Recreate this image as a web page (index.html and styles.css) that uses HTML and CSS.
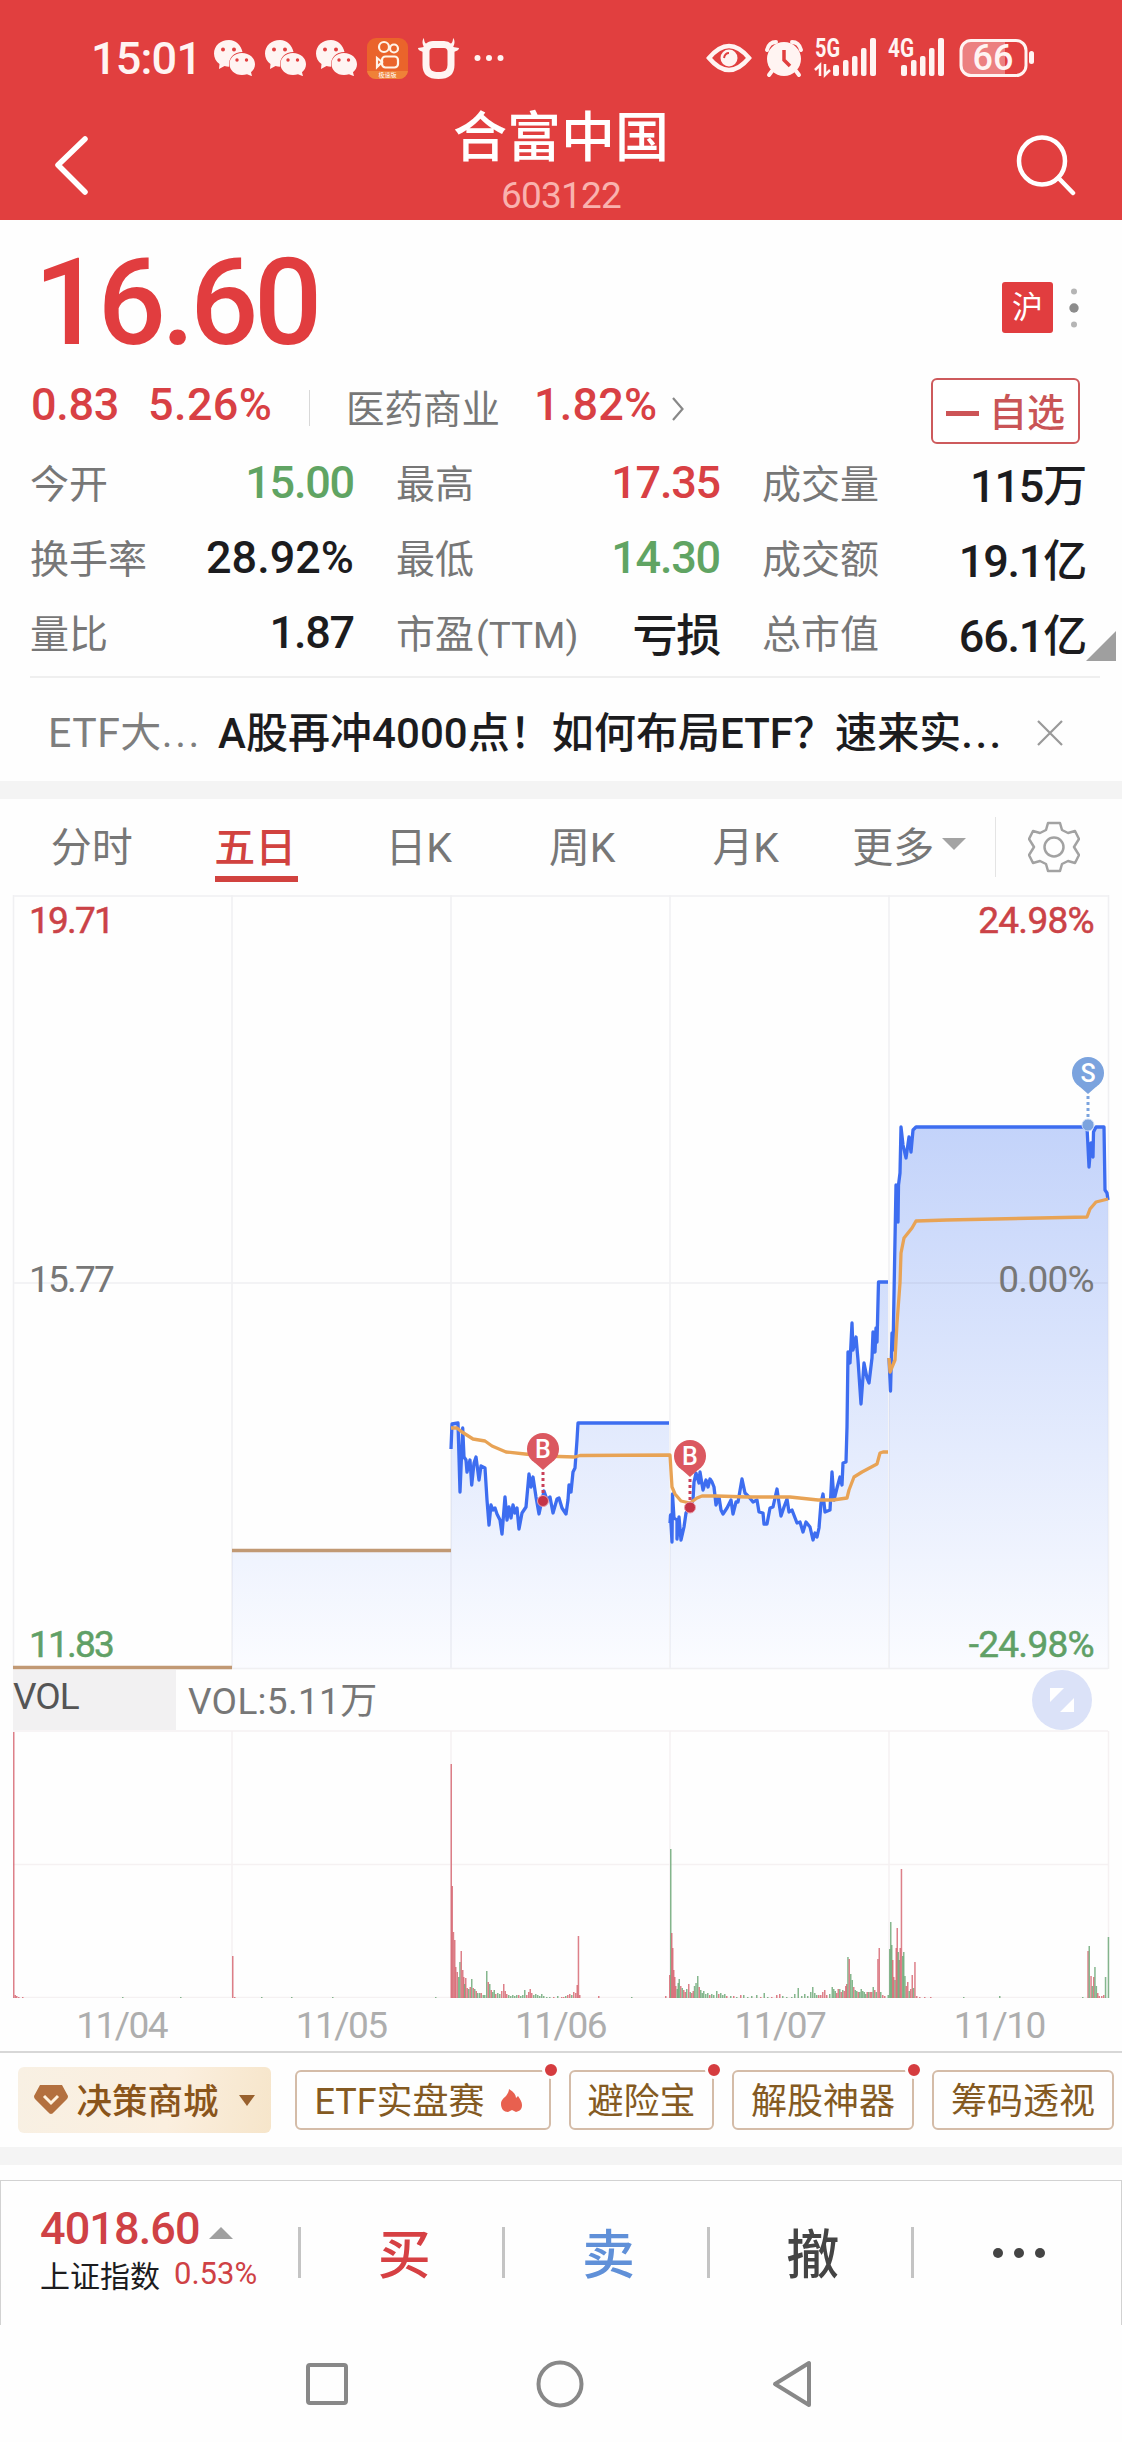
FILE: index.html
```html
<!DOCTYPE html>
<html lang="zh-CN">
<head>
  <meta charset="UTF-8">
  <title>合富中国 603122</title>
  <link rel="stylesheet" href="styles.css">
</head>
<body>

  <svg width="0" height="0" class="defs">
    <symbol id="wechat" viewBox="0 0 41 36">
      <path fill="#fff4f2" d="M15 0C6.500 0 0 5.800 0 13.500c0 4.200 2 8 5.500 10.500L5 29l5.500-3c1.500.5 3 .7 4.600.7C14 18 20 12 28.500 12 27 5 22 0 15 0z"/>
      <path fill="#fff4f2" d="M28 13c-7.500 0-12.500 5-12.500 11S20.500 35 28 35c1.700 0 3.500-.3 5-.8l5 2-1-4c2.500-2 4-5 4-8C41 18 35.500 13 28 13z"/>
      <g fill="#e13f3f"><circle cx="9" cy="9.500" r="2"/><circle cx="20" cy="9.500" r="2"/><circle cx="23" cy="20" r="1.700"/><circle cx="32.500" cy="20" r="1.700"/></g>
    </symbol>
  </svg>

  <header class="header">
    <div class="status-bar">
      <span class="clock">15:01</span>
      <div class="status-apps">
        <svg width="41" height="36"><use href="#wechat"/></svg>
        <svg width="41" height="36"><use href="#wechat"/></svg>
        <svg width="41" height="36"><use href="#wechat"/></svg>
        <svg width="41" height="41" viewBox="0 0 41 41">
          <rect width="41" height="41" rx="9" fill="#ea642b"/>
          <path d="M0 33h41a9 9 0 0 1-9 8H9a9 9 0 0 1-9-8z" fill="#ef8138"/>
          <g fill="none" stroke="#fff4e8" stroke-width="2.200"><circle cx="17" cy="9" r="5"/><circle cx="27" cy="10.500" r="4"/><rect x="15" y="18.500" width="16" height="11" rx="3.500"/><path d="M15 24l-5-4v9z"/></g>
          <text x="20.500" y="39" font-size="6" text-anchor="middle" fill="#fff">极速版</text>
        </svg>
        <svg width="41" height="41" viewBox="0 0 41 41">
          <path fill="none" stroke="#fff4f2" stroke-width="7" d="M15 6.500h11c4 0 7 3 7 7V27c0 7-4 10.500-12.500 10.500S8 34 8 27V13.500c0-4 3-7 7-7z"/>
          <path fill="#fff4f2" d="M6 0c0 5 2 6 5 7l-3 7C3 14 0 12 0 10l6-1C4 6 4 2 6 0zM35 0c0 5-2 6-5 7l3 7c5 0 8-2 8-4l-6-1c2-3 2-7 0-9z"/>
        </svg>
      </div>
      <svg class="more-dots" width="30" height="8" viewBox="0 0 30 8" fill="#fff4f2"><circle cx="3.500" cy="4" r="3"/><circle cx="15" cy="4" r="3"/><circle cx="26.500" cy="4" r="3"/></svg>

      <svg class="signals" width="329" height="62" viewBox="706 27 329 62">
        <path d="M709 58q20-24 40 0q-20 24-40 0z" fill="none" stroke="#fff4f2" stroke-width="4.500"/>
        <circle cx="729" cy="58" r="8.500" fill="#fff4f2"/>
        <path d="M724 58q1-5 5-5" fill="none" stroke="#e13f3f" stroke-width="2"/>
        <circle cx="784" cy="59" r="17" fill="#fff4f2"/>
        <path d="M767 50q2-8 9-8M801 50q-2-8-9-8M772 71l-3 4M796 71l3 4" stroke="#fff4f2" stroke-width="4" fill="none" stroke-linecap="round"/>
        <path d="M784 50v10l6 6" fill="none" stroke="#e13f3f" stroke-width="3.500"/>
        <text x="815" y="57" textLength="25" lengthAdjust="spacingAndGlyphs">5G</text>
        <text x="888" y="57" textLength="26" lengthAdjust="spacingAndGlyphs">4G</text>
        <path d="M815 70l5-5v11M830 70l-5 5V64" fill="none" stroke="#fff4f2" stroke-width="2.500"/>
        <g fill="#fff4f2">
          <rect x="833" y="65" width="6" height="11" rx="2"/><rect x="843" y="60" width="5.500" height="16" rx="2"/><rect x="852" y="56" width="5.500" height="20" rx="2"/><rect x="861" y="48" width="5.500" height="28" rx="2"/><rect x="870" y="38" width="6" height="38" rx="2"/>
          <rect x="901" y="65" width="6" height="11" rx="2"/><rect x="911" y="60" width="5.500" height="16" rx="2"/><rect x="920" y="56" width="5.500" height="20" rx="2"/><rect x="929" y="48" width="5.500" height="28" rx="2"/><rect x="938" y="38" width="6" height="38" rx="2"/>
          <rect x="1029" y="51" width="5" height="13" rx="2.500"/>
        </g>
        <path d="M971 41h34v34h-34q-10 0-10-10V51q0-10 10-10z" fill="#ec8080"/>
        <rect x="961" y="40.500" width="65" height="35" rx="10" fill="none" stroke="#fff4f2" stroke-width="3"/>
        <text class="battery-text" x="993" y="70" text-anchor="middle">66</text>
      </svg>
    </div>

    <div class="title-bar">
      <svg class="nav-icon" width="36" height="60" viewBox="0 0 36 60"><path d="M32 4L5 30l27 27" fill="none" stroke="#fff" stroke-width="5.500" stroke-linecap="round" stroke-linejoin="round"/></svg>
      <div class="title">
        <h1>合富中国</h1>
        <span>603122</span>
      </div>
      <svg class="nav-icon" width="62" height="62" viewBox="0 0 62 62"><g fill="none" stroke="#fff" stroke-width="4.500" stroke-linecap="round"><ellipse cx="27" cy="27" rx="23" ry="23.500"/><path d="M43.500 44L58 59"/></g></svg>
    </div>
  </header>

  <section class="quote">
    <div class="price-row">
      <span class="price">16.60</span>
      <span class="market">沪</span>
      <svg width="12" height="42" viewBox="0 0 12 42"><circle cx="6" cy="4.500" r="3" fill="#b5b5b5"/><circle cx="6" cy="21" r="4.700" fill="#8c8c8c"/><circle cx="6" cy="37.500" r="3" fill="#b5b5b5"/></svg>
    </div>
    <div class="change-row">
      <span class="num red">0.83</span>
      <span class="num red percent">5.26%</span>
      <i class="split"></i>
      <span class="sector">医药商业</span>
      <span class="num red sector-change">1.82%</span>
      <svg width="14" height="26" viewBox="0 0 14 26"><path d="M2 2l9.500 11L2 24" fill="none" stroke="#888" stroke-width="2.200"/></svg>
      <button class="favorite"><i></i>自选</button>
    </div>
    <div class="stats">
      <div class="stat"><label>今开</label><b class="green">15.00</b></div>
      <div class="stat"><label>最高</label><b class="red">17.35</b></div>
      <div class="stat low"><label>成交量</label><b>115<em>万</em></b></div>
      <div class="stat"><label>换手率</label><b class="wide">28.92%</b></div>
      <div class="stat"><label>最低</label><b class="green">14.30</b></div>
      <div class="stat low"><label>成交额</label><b>19.1<em>亿</em></b></div>
      <div class="stat"><label>量比</label><b>1.87</b></div>
      <div class="stat"><label>市盈<span>(TTM)</span></label><b>亏损</b></div>
      <div class="stat low"><label>总市值</label><b>66.1<em>亿</em></b></div>
      <i class="corner"></i>
    </div>
  </section>

  <section class="news">
    <span class="news-tag">ETF大<span>...</span></span>
    <span class="news-text">A股再冲4000点！如何布局ETF？速来实<span>...</span></span>
    <svg width="28" height="26" viewBox="0 0 28 26"><path d="M2 1l24 24M26 1L2 25" stroke="#999" stroke-width="2.200"/></svg>
  </section>

  <nav class="tabs">
    <a>分时</a>
    <a class="active">五日</a>
    <a>日K</a>
    <a>周K</a>
    <a>月K</a>
    <a>更多<i class="caret"></i></a>
    <svg class="gear" width="52" height="52" viewBox="0 0 52 52">
      <path d="M20 2h12l2 7 6 3 7-2 4 8-5 8 5 8-4 8-7-2-6 3-2 7H20l-2-7-6-3-7 2-4-8 5-8-5-8 4-8 7 2 6-3z" fill="none" stroke="#a2a2a2" stroke-width="2.500" stroke-linejoin="round"/>
      <circle cx="26" cy="26" r="9.500" fill="none" stroke="#a2a2a2" stroke-width="2.500"/>
    </svg>
  </nav>

  <!-- five-day price line, y runs 19.71 .. 11.83 -->
  <svg class="chart" width="1122" height="775" viewBox="0 895 1122 775">
    <defs>
      <linearGradient id="area" gradientUnits="userSpaceOnUse" x1="0" y1="1127" x2="0" y2="1669">
        <stop offset="0" stop-color="#c3d3fa"/>
        <stop offset="1" stop-color="#fbfcff"/>
      </linearGradient>
    </defs>
    <g id="areas" fill="url(#area)"><path d="M232 1551H451V1668H232z"/></g>
    <g stroke="#808090" stroke-opacity=".11" stroke-width="1.500">
      <path d="M13 896h1095M13 1283h1095M13 1668.500h1095M13.500 895v774M232 895v774M451 895v774M670 895v774M889 895v774M1108.500 895v774" fill="none"/>
    </g>
    <path d="M13 1667.500h219M232 1550.500h219" stroke="#c19974" stroke-width="3.500"/>
    <g id="prices" fill="none" stroke="#3d6df0" stroke-width="3.300" stroke-linejoin="round"></g>
    <g fill="none" stroke="#e8a355" stroke-width="3.300" stroke-linejoin="round">
      <path d="M451 1428L457 1428 462 1432 473 1439 485 1441 492 1446 506 1452 525 1454 543 1456 575 1457 580 1455.500 670 1455 672 1487 675 1494 681 1501 690 1503 697 1498 702 1496 717 1496 747 1497 790 1497 818 1500 833 1500 847 1498 849 1490 854 1477 862 1472 877 1464 880 1453 883 1452 888 1452"/>
      <path d="M889 1358L890 1372 895 1360 897 1323 900 1283 901 1253 904 1238 912 1228 916 1221 947 1220 1087 1217 1090 1209 1096 1202 1108 1199"/>
    </g>
    <g class="pins">
      <g fill="#db5860"><path d="M543 1470l-9-8h18z"/><circle cx="543" cy="1449" r="16"/><path d="M690 1477l-9-8h18z"/><circle cx="690" cy="1456" r="16"/></g>
      <path d="M543 1472v24M690 1479v22" stroke="#c94058" stroke-width="3" stroke-dasharray="3 3"/>
      <g fill="#c43347" stroke="#e8a0ac"><circle cx="543" cy="1501" r="5.500"/><circle cx="690" cy="1507.500" r="5.500"/></g>
      <g fill="#7ba3de"><path d="M1088 1094l-9-8h18z"/><circle cx="1088" cy="1073" r="16"/><circle cx="1088" cy="1125" r="6" stroke="#c8daf6"/></g>
      <path d="M1088 1096v22" stroke="#7ba3de" stroke-width="3" stroke-dasharray="3 3"/>
      <text x="543" y="1457.500">B</text><text x="690" y="1464.500">B</text><text x="1088" y="1082">S</text>
    </g>
    <g class="axis">
      <text class="up" x="29" y="933">19.71</text>
      <text x="29" y="1292">15.77</text>
      <text class="down" x="29" y="1657">11.83</text>
      <g class="axis-right">
        <text class="up" x="1094" y="933">24.98%</text>
        <text x="1094" y="1292">0.00%</text>
        <text class="down" x="1094" y="1657">-24.98%</text>
      </g>
    </g>
  </svg>

  <div class="vol-head">
    <span class="vol-name">VOL</span>
    <span class="vol-value">VOL:5.11万</span>
    <svg width="60" height="60" viewBox="0 0 60 60"><circle cx="30" cy="30" r="30" fill="#dbe2f8"/><path d="M18 18h14L18 32zM42 28v14H28z" fill="#fff"/></svg>
  </div>

  <svg class="volume" width="1122" height="268" viewBox="0 1730 1122 268">
    <path d="M13 1731h1095M13 1864.500h1095M13 1997.500h1095M232 1731v267M451 1731v267M670 1731v267M889 1731v267M1108.500 1731v267" fill="none" stroke="#f5f1f2" stroke-width="1.500"/>
    <g id="bars"></g>
  </svg>

  <div class="dates"><span>11/04</span><span>11/05</span><span>11/06</span><span>11/07</span><span>11/10</span></div>

  <div class="chips">
    <span class="chip mall">
      <svg width="34" height="30" viewBox="0 0 34 30"><path d="M6 0h22l6 11q0 2-1 3L20 27q-3 4-6 0L1 14q-1-1-1-3z" fill="#b3703f"/><path d="M10 11l7 7 7-7" fill="none" stroke="#fff2df" stroke-width="3"/></svg>
      <span>决策商城</span><i class="caret brown"></i>
    </span>
    <span class="chip etf"><span>ETF实盘赛</span>
      <svg width="21" height="23" viewBox="0 0 21 23"><path d="M8 0c5 3 7 6 7 9l2-2c2 3 4 6 4 9 0 4-2 6-6 7l-4-2-4 2c-4 0-7-3-7-8 0-4 3-6 5-8 2-3 3-5 3-7z" fill="#e8604f"/></svg>
      <i class="dot"></i>
    </span>
    <span class="chip shield"><span>避险宝</span><i class="dot"></i></span>
    <span class="chip four"><span>解股神器</span><i class="dot"></i></span>
    <span class="chip four"><span>筹码透视</span></span>
  </div>

  <footer class="toolbar">
    <div class="index">
      <div class="index-top"><span>4018.60</span><i></i></div>
      <div class="index-bottom">上证指数<span>0.53%</span></div>
    </div>
    <a class="action buy">买</a>
    <a class="action sell">卖</a>
    <a class="action">撤</a>
    <a class="action"><svg width="54" height="12" viewBox="0 0 54 12" fill="#444"><circle cx="6" cy="6" r="5"/><circle cx="27" cy="6" r="5"/><circle cx="48" cy="6" r="5"/></svg></a>
  </footer>

  <div class="system-nav">
    <svg width="44" height="44" viewBox="0 0 44 44"><rect x="3" y="3" width="38" height="38" rx="2" fill="none" stroke="#888" stroke-width="4"/></svg>
    <svg width="50" height="50" viewBox="0 0 50 50"><circle cx="25" cy="25" r="21.500" fill="none" stroke="#888" stroke-width="4"/></svg>
    <svg width="44" height="50" viewBox="0 0 44 50"><path d="M38 4v42L4 25z" fill="none" stroke="#888" stroke-width="4" stroke-linejoin="round"/></svg>
  </div>

  <script>
    const SVG = "http://www.w3.org/2000/svg";
    const priceDays = [
      "451,1449 452,1424 458,1423 460,1492 462.7,1428 464,1457 466,1460 467,1472 470,1460 471.700,1485 474,1463 476,1457 479,1480 481,1466 485,1468 487,1500 489,1525 491,1505 493,1510 495,1508 497,1514 500,1520 502,1534 505,1497 507,1520 509,1507 511,1518 513,1505 515,1513 517,1508 519,1529 522,1513 526,1507 529,1474 531,1487 533,1477 536,1497 539,1514 542,1500 544,1491 547,1500 550,1497 553,1513 557,1499 559,1498 562,1508 566,1514 568,1500 569,1485 571,1492 573,1472 575,1468 577,1440 578,1423 669,1423",
      "670,1523 670.5,1515 672,1542 672.500,1494 674,1518 677,1520 677,1539 679,1517 681,1540 684,1527 686,1513 690,1507 693,1500 694,1482 696,1473 699,1483 700,1472 703,1490 706,1480 708,1487 710,1479 712,1482 714,1487 716,1505 719,1497 721,1510 723,1514 727,1508 731,1500 733,1514 736,1502 738,1502 742,1479 745,1493 749,1497 753,1502 757,1500 759,1512 763,1513 764,1524 767,1524 770,1508 773,1507 777,1489 779,1503 781,1516 784,1507 787,1499 789,1512 792,1510 797,1523 800,1522 803,1532 806,1522 810,1527 813,1540 815,1533 817,1537 819,1528 821,1503 823,1494 825,1512 830,1510 832,1472 834,1500 837,1488 840,1477 842,1485 843,1463 846,1462 847,1427 848,1352 850,1363 852,1323 853,1350 856,1337 858,1360 861,1404 864,1363 867,1378 869,1383 872,1358 873,1332 875,1352 876,1328 877,1342 878.500,1282 888,1282",
      "889,1358 890.500,1391 892,1333 893,1350 896,1185 898,1222 898.500,1185 900,1173 901,1127 903,1145 906,1158 909,1137 911,1152 913,1130 916,1127 1087,1127 1089,1167 1091,1143 1093,1157 1093.500,1132 1096,1127 1104,1127 1105,1190 1107,1193 1108,1200"
    ];

    function add(parent, tag, attrs) {
      const el = document.createElementNS(SVG, tag);
      for (const key in attrs) el.setAttribute(key, attrs[key]);
      document.getElementById(parent).appendChild(el);
    }

    priceDays.forEach(points => {
      const list = points.split(" ");
      const first = list[0].split(",")[0];
      const last = list[list.length - 1].split(",")[0];
      add("areas", "polygon", { points: `${first},1668 ${points} ${last},1668` });
      add("prices", "polyline", { points });
    });

    // x, height, r = up / g = down
    const bars = "13,266,r 14.5,3,r 16,2,r 18,1,r 22,1,r 122,1,g 180,1,g 232,42,r 234,1,r 261,1,g 291,1,g 332,1,g 435,1,g " +
      "450.5,234,r 451.5,112,r 452.7,66,r 454,58,r 455,31,r 456.5,26,r 458,21,g 459.2,36,g 460.5,47,r 462,28,r 463,21,r 464,14,g 465,20,r 466.5,10,r 468,9,g 469.5,11,r 471,19,g 472.500,10,r 474,9,g 475.5,7,r 477,5,g 479,5,g 480.5,5,r 482.5,3,g 484,3,g 486,27,g 487.500,16,r 489,14,g 490.5,8,r 492,6,g 493.5,8,g 495,4,r 497,5,g 499,4,g 501,7,r 503,14,r 504.5,7,r 506,4,r 508,3,g 510,2,g 512,3,g 514,2,g 516,3,g 518,3,r 520,2,g 522,3,g 524,8,g 526,3,r 528,6,r 529.5,9,r 531,5,r 533,3,g 535,4,g 537,3,g 539,2,g 541,4,g 543,2,g 546,1,g 549,1,g 553,1,r 557,2,g 561,1,r 563,1,r 565,2,g 567,3,r 569,4,r 571,3,g 573,6,r 575,5,r 576.5,13,r 577.700,62,r 579,3,r 598,2,r 631,1,g 665,2,r " +
      "669,23,r 670,149,g 671,65,r 672,50,r 673,28,r 674,21,r 675,12,r 676.500,9,g 677.500,15,g 678.500,19,g 680,12,r 681.500,10,g 683,8,r 684.5,6,r 686,9,g 688,14,r 689.500,6,g 691,5,r 692.500,7,r 693.800,12,g 695.300,15,g 697,22,g 698.500,11,r 700,8,g 701.500,5,g 703,7,g 705,4,g 707,5,g 709,3,r 711,4,g 713,3,g 716,7,g 718,4,r 720,5,g 722,3,g 724,4,g 726,2,r 730,2,g 733,2,r 736,1,g 740,3,r 743,3,g 747,1,g 751,2,g 756,3,g 760,1,r 763.500,5,g 767,1,g 771,1,r 776,3,r 779,4,r 782,2,g 786,1,g 791,1,g 794,4,g 797.500,10,g 801,2,g 804,4,g 807,2,g 810,6,g 812,11,g 814,5,g 816,3,g 818,3,r 820,3,r 822,6,r 824,8,r 826,3,r 829,4,g 831.500,11,g 833,9,g 834.500,7,g 836,5,r 837.500,9,r 839,9,g 840.500,6,r 842,8,g 843.500,7,r 845,12,r 846,14,r 847.200,41,g 848.500,39,r 850,24,g 851.500,18,g 853,11,r 854.500,8,g 856,7,g 857.500,6,r 859,6,g 860.500,9,g 862,7,g 863.500,6,g 865,4,g 866.500,6,r 868,6,g 869.500,6,r 871,6,r 872.500,11,g 874,8,r 875.500,6,g 877.200,39,r 878.500,50,r 880,6,g 882,3,r 884,2,r " +
      "887.5,3,g 889,49,g 890,76,g 891,53,g 892,38,r 893,21,r 894.300,18,g 895.500,50,r 896.500,70,r 897.500,46,g 898.500,38,g 899.500,50,r 900.700,129,r 902,42,g 903,46,g 904.200,22,g 905.500,12,r 907,16,r 908.500,7,g 910,9,r 911.500,23,r 912.800,10,g 914.200,36,r 916,2,r 919,1,r 924,1,r 930,1,r 963,1,g 999,2,g 1082,1,g " +
      "1087.300,47,r 1088.500,52,g 1090.300,22,r 1091.600,12,g 1093,21,r 1094.200,31,g 1095.600,12,g 1097,5,r 1098.500,2,r 1101,2,r 1103,3,r 1104.800,21,g 1107.700,61,g";

    bars.split(" ").forEach(bar => {
      const [x, h, dir] = bar.split(",");
      add("bars", "rect", { x, y: 1998 - h, width: 1.5, height: h, class: dir });
    });
  </script>

</body>
</html>
```
FILE: styles.css
```css
* {
  box-sizing: border-box;
}

body {
  margin: 0;
  width: 1122px;
  height: 2442px;
  overflow: hidden;
  background: #fefefe;
  font-family: Roboto, "Noto Sans CJK SC", sans-serif;
  color: #1c1c1e;
}

svg {
  display: block;
  flex: none;
}

i, em {
  font-style: normal;
}

span, a, label, b {
  white-space: nowrap;
}

.defs {
  position: absolute;
}

.red {
  color: #d84044;
}

.stats .green {
  color: #60a463;
}

/* header */
.header {
  height: 220px;
  background: #e13f3f;
}

.status-bar {
  display: flex;
  align-items: center;
  height: 96px;
  padding: 20px 87px 0 91px;
}

.clock {
  width: 123px;
  font-size: 45px;
  font-weight: 500;
  letter-spacing: -.8px;
  color: #fff4f2;
}

.status-apps {
  display: flex;
  align-items: center;
  gap: 10px;
}

.more-dots {
  margin-left: 15px;
}

.signals {
  margin-left: auto;
  font-size: 25px;
  font-weight: 700;
  fill: #fff4f2;
}

.battery-text {
  font-size: 36px;
  font-weight: 500;
}

.title-bar {
  display: flex;
  justify-content: space-between;
  align-items: center;
  height: 124px;
  padding: 0 45px 0 53px;
}

.title {
  text-align: center;
  padding-left: 18px;
}

.title h1 {
  margin: 0;
  font-size: 54px;
  font-weight: 500;
  line-height: 81px;
  color: #fff;
}

.title span {
  display: block;
  margin-top: -6px;
  font-size: 37px;
  line-height: 45px;
  letter-spacing: -.8px;
  color: #f9b2ae;
}

.nav-icon {
  margin-top: 14px;
}

/* quote */
.price-row {
  display: flex;
  align-items: center;
  height: 145px;
  padding: 20px 42px 0 34px;
}

.price {
  flex: 1;
  font-size: 120px;
  font-weight: 500;
  line-height: 124px;
  letter-spacing: -4.5px;
  color: #e13d3f;
}

.market {
  width: 51px;
  height: 51px;
  margin: 10px 15px 0 0;
  border-radius: 3px;
  background: #e13d3f;
  color: #fff;
  font-size: 31px;
  line-height: 52px;
  text-align: center;
}

.price-row svg {
  margin-top: 10px;
}

.change-row {
  display: flex;
  align-items: center;
  height: 80px;
  padding: 0 42px 2px 31px;
}

.num {
  font-size: 45px;
  font-weight: 500;
  letter-spacing: -.3px;
  width: 117px;
}

.percent {
  width: 161px;
  letter-spacing: .4px;
}

.split {
  width: 1px;
  height: 36px;
  margin-top: 8px;
  background: #d8d8d8;
}

.sector {
  width: 188px;
  margin: 3px 0 0 36px;
  font-size: 38.5px;
  color: #777;
}

.sector-change {
  width: 137px;
  letter-spacing: .2px;
}

.change-row svg {
  margin-top: 9px;
}

.favorite {
  display: flex;
  align-items: center;
  gap: 10px;
  width: 149px;
  height: 66px;
  margin: 14px 0 0 auto;
  padding: 4px 0 0 13px;
  border: 2px solid #cd5a5c;
  border-radius: 6px;
  background: #fff;
  color: #c95456;
  font: 500 38px/56px Roboto, "Noto Sans CJK SC", sans-serif;
}

.favorite i {
  width: 33px;
  height: 5px;
  background: #cc5456;
}

.stats {
  position: relative;
  display: grid;
  grid-template-columns: repeat(3, 324px);
  grid-auto-rows: 75px;
  column-gap: 42px;
  height: 233px;
  margin: 0 22px 0 30px;
  border-bottom: 2px solid #efefef;
}

.stat {
  display: flex;
  justify-content: space-between;
  align-items: center;
}

.stat label {
  padding-bottom: 3px;
  font-size: 39px;
  color: #777;
}

.stat label span {
  font-size: 37px;
  margin-left: 2px;
}

.stat b {
  font-size: 45px;
  font-weight: 500;
  letter-spacing: -1.2px;
}

.stat .wide {
  letter-spacing: 0;
}

.stat.low b {
  padding-top: 1px;
}

.stat em {
  font-size: 44px;
}

.corner {
  position: absolute;
  right: -16px;
  bottom: 15px;
  border-left: 30px solid transparent;
  border-bottom: 30px solid #9f9f9f;
}

/* news */
.news {
  display: flex;
  align-items: center;
  height: 103px;
  padding: 6px 0 0 48px;
}

.news-tag {
  width: 170px;
  padding-bottom: 7px;
  font-size: 41px;
  letter-spacing: .5px;
  color: #7e7e7e;
}

.news-tag span, .news-text span {
  letter-spacing: 2.5px;
}

.news-text {
  width: 818px;
  padding-bottom: 7px;
  font-size: 42px;
  font-weight: 500;
  letter-spacing: .05px;
}

/* tabs */
.tabs {
  display: flex;
  height: 114px;
  border-top: 18px solid #f4f4f4;
  padding-left: 10px;
}

.tabs a {
  display: flex;
  justify-content: center;
  align-items: center;
  width: 163.5px;
  height: 90px;
  font-size: 41px;
  color: #777;
}

.tabs .active {
  position: relative;
  color: #d1423f;
  font-weight: 500;
}

.active::after {
  content: "";
  position: absolute;
  left: 41px;
  bottom: 7px;
  width: 83px;
  height: 6px;
  background: #d1423f;
}

.caret {
  margin-left: 8px;
  border: 12px solid transparent;
  border-top-color: #a3a3a3;
  border-bottom: 0;
}

.gear {
  box-sizing: content-box;
  margin-top: 18px;
  padding: 4px 0 4px 32px;
  margin-left: 4px;
  border-left: 1px solid #e4e4e4;
}

/* chart */
.axis {
  font-size: 37px;
  letter-spacing: -1.8px;
  fill: #777;
  stroke-width: .5;
}

.axis-right {
  letter-spacing: -.7px;
  text-anchor: end;
}

.axis .up {
  fill: #cb4247;
  stroke: #cb4247;
}

.axis .down {
  fill: #60a066;
  stroke: #60a066;
}

.pins text {
  font-size: 25px;
  font-weight: 500;
  fill: #fff;
  text-anchor: middle;
}

.vol-head {
  display: flex;
  height: 60px;
  padding: 0 30px 0 13px;
  font-size: 37px;
}

.vol-name {
  width: 163px;
  background: #f2f1f2;
  color: #555;
  letter-spacing: -1px;
  line-height: 53px;
}

.vol-value {
  flex: 1;
  padding-left: 12px;
  color: #777;
  letter-spacing: .3px;
  line-height: 63px;
}

.volume .r {
  fill: #d4606b;
  opacity: .8;
}

.volume .g {
  fill: #66a572;
  opacity: .8;
}

.dates {
  display: flex;
  height: 55px;
  padding: 0 13px 0 12px;
  border-bottom: 2px solid #d7d7d7;
}

.dates span {
  flex: 1;
  text-align: center;
  font-size: 37px;
  line-height: 55px;
  letter-spacing: -1.5px;
  color: #aeaeae;
}

/* chips */
.chips {
  display: flex;
  align-items: center;
  height: 112px;
  padding-left: 18px;
  border-bottom: 18px solid #f4f4f4;
  gap: 18px;
}

.chip {
  position: relative;
  display: flex;
  justify-content: center;
  align-items: center;
  flex: none;
  height: 60px;
  border: 2px solid #d4bca8;
  border-radius: 6px;
  font-size: 36px;
  color: #845a22;
}

.chip span {
  padding-bottom: 4px;
}

.mall {
  width: 253px;
  height: 66px;
  margin-right: 6px;
  border: 0;
  background: linear-gradient(100deg, #f8f0e3, #fbefdf 60%, #f6e5ca);
  font-size: 35.5px;
  font-weight: 500;
  gap: 8px;
  color: #8a551b;
}

.caret.brown {
  margin-left: 12px;
  border-width: 11px 8px 0;
  border-top-color: #99612e;
}

.etf {
  width: 256px;
  padding-right: 10px;
  gap: 16px;
}

.shield {
  width: 145px;
}

.four {
  width: 182px;
}

.dot {
  position: absolute;
  top: -11px;
  right: -11px;
  width: 18px;
  height: 18px;
  border: 3px solid #fefefe;
  border-radius: 50%;
  background: #d53c3f;
}

/* bottom bar */
.toolbar {
  display: flex;
  height: 145px;
  margin-top: 15px;
  border: solid #d2d2d2;
  border-width: 1px 1px 0;
}

.index {
  width: 297px;
  padding: 24px 0 0 39px;
}

.index-top {
  display: flex;
  align-items: center;
  gap: 9px;
  height: 46px;
  font-size: 45px;
  font-weight: 500;
  letter-spacing: -.9px;
  color: #cf4145;
}

.index-top i {
  margin-top: 10px;
  border: 12px solid transparent;
  border-bottom-color: #a0a0a0;
  border-top: 0;
}

.index-bottom {
  display: flex;
  align-items: center;
  gap: 14px;
  height: 46px;
  font-size: 30px;
}

.index-bottom span {
  padding-bottom: 1px;
  font-size: 31px;
  color: #cf4145;
}

.action {
  position: relative;
  display: flex;
  justify-content: center;
  align-items: center;
  width: 204.3px;
  height: 143px;
  padding-left: 8px;
  padding-bottom: 4px;
  font-size: 53px;
  font-weight: 500;
  color: #444;
}

.action svg {
  margin: 4px 0 0 3px;
}

.action::before {
  content: "";
  position: absolute;
  left: 0;
  top: 46px;
  width: 3px;
  height: 51px;
  background: #c4c4c4;
}

.buy {
  color: #d64043;
}

.sell {
  color: #6090d8;
}

.system-nav {
  display: flex;
  justify-content: space-between;
  align-items: center;
  height: 117px;
  padding: 0 307px 0 305px;
}
```
